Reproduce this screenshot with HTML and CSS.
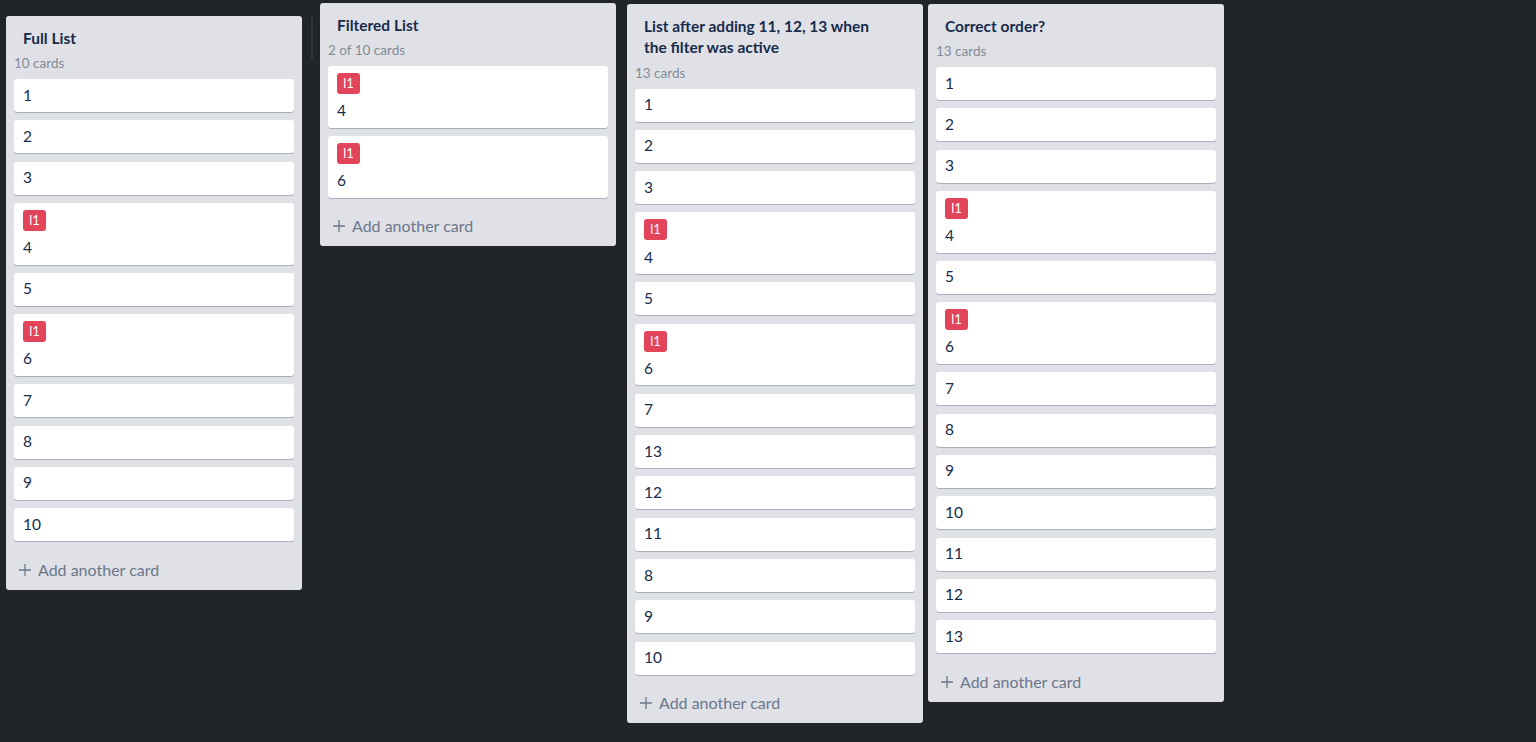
FILE: index.html
```html
<!DOCTYPE html>
<html lang="en">
<head>
<meta charset="utf-8">
<title>Board</title>
<link rel="stylesheet" href="styles.css">
</head>
<body>
<div class="board">
  <div class="list list-full">
    <div class="list-title">Full List</div>
    <div class="list-count">10 cards</div>
    <div class="cards">
      <div class="card">1</div>
      <div class="card">2</div>
      <div class="card">3</div>
      <div class="card"><span class="label">l1</span><span class="card-text">4</span></div>
      <div class="card">5</div>
      <div class="card"><span class="label">l1</span><span class="card-text">6</span></div>
      <div class="card">7</div>
      <div class="card">8</div>
      <div class="card">9</div>
      <div class="card">10</div>
    </div>
    <div class="add-card"><svg class="plus" viewBox="0 0 14 14" width="14" height="14"><path d="M7 1v12M1 7h12" stroke="#6b778c" stroke-width="1.3" fill="none"/></svg>Add another card</div>
  </div>
  <div class="drag-bar"></div>
  <div class="list list-filtered">
    <div class="list-title">Filtered List</div>
    <div class="list-count">2 of 10 cards</div>
    <div class="cards">
      <div class="card"><span class="label">l1</span><span class="card-text">4</span></div>
      <div class="card"><span class="label">l1</span><span class="card-text">6</span></div>
    </div>
    <div class="add-card"><svg class="plus" viewBox="0 0 14 14" width="14" height="14"><path d="M7 1v12M1 7h12" stroke="#6b778c" stroke-width="1.3" fill="none"/></svg>Add another card</div>
  </div>
  <div class="list list-after">
    <div class="list-title">List after adding 11, 12, 13 when the filter was active</div>
    <div class="list-count">13 cards</div>
    <div class="cards">
      <div class="card">1</div>
      <div class="card">2</div>
      <div class="card">3</div>
      <div class="card"><span class="label">l1</span><span class="card-text">4</span></div>
      <div class="card">5</div>
      <div class="card"><span class="label">l1</span><span class="card-text">6</span></div>
      <div class="card">7</div>
      <div class="card">13</div>
      <div class="card">12</div>
      <div class="card">11</div>
      <div class="card">8</div>
      <div class="card">9</div>
      <div class="card">10</div>
    </div>
    <div class="add-card"><svg class="plus" viewBox="0 0 14 14" width="14" height="14"><path d="M7 1v12M1 7h12" stroke="#6b778c" stroke-width="1.3" fill="none"/></svg>Add another card</div>
  </div>
  <div class="list list-correct">
    <div class="list-title">Correct order?</div>
    <div class="list-count">13 cards</div>
    <div class="cards">
      <div class="card">1</div>
      <div class="card">2</div>
      <div class="card">3</div>
      <div class="card"><span class="label">l1</span><span class="card-text">4</span></div>
      <div class="card">5</div>
      <div class="card"><span class="label">l1</span><span class="card-text">6</span></div>
      <div class="card">7</div>
      <div class="card">8</div>
      <div class="card">9</div>
      <div class="card">10</div>
      <div class="card">11</div>
      <div class="card">12</div>
      <div class="card">13</div>
    </div>
    <div class="add-card"><svg class="plus" viewBox="0 0 14 14" width="14" height="14"><path d="M7 1v12M1 7h12" stroke="#6b778c" stroke-width="1.3" fill="none"/></svg>Add another card</div>
  </div>
</div>
</body>
</html>
```

FILE: styles.css
```css
html, body {
  margin: 0;
  padding: 0;
  background: #212428;
  height: 100%;
}

body {
  font-family: Lato, "Open Sans", "Noto Sans", sans-serif;
  color: #172b4d;
}

.board {
  display: flex;
  align-items: flex-start;
  padding-left: 6px;
}

.list {
  width: 296px;
  box-sizing: border-box;
  background: #dfe1e6;
  border-radius: 3px;
  padding: 11.5px 8px 0 8px;
  display: flex;
  flex-direction: column;
}

.list-full { margin-top: 16px; }
.list-filtered { margin-top: 3px; margin-left: 7px; }
.list-after { margin-top: 4px; margin-left: 11px; }
.list-correct { margin-top: 4px; margin-left: 5px; }

.drag-bar {
  width: 2px;
  height: 44px;
  margin-top: 16px;
  margin-left: 9px;
  background: #2f3237;
  border-radius: 2px;
}

.list-title {
  font-size: 15.5px;
  font-weight: 700;
  line-height: 21.5px;
  padding: 0 34px 0 9px;
  color: #172b4d;
}

.list-count {
  font-size: 13.5px;
  line-height: 16px;
  margin-top: 6px;
  color: #838c95;
}

.cards {
  display: flex;
  flex-direction: column;
  gap: 8.33px;
  margin-top: 8px;
}

.card {
  background: #fff;
  border-radius: 3px;
  box-shadow: 0 1px 0 rgba(9, 30, 66, 0.25);
  padding: 5.5px 8px 7.5px 9px;
  font-size: 15.5px;
  line-height: 20px;
  color: #172b4d;
  display: flex;
  flex-direction: column;
  align-items: flex-start;
}

.label {
  display: inline-block;
  background: #e2445a;
  color: #fff;
  border-radius: 3px;
  height: 21px;
  width: 23px;
  box-sizing: border-box;
  font-size: 13px;
  line-height: 21px;
  text-align: center;
  margin-top: 1.5px;
  margin-bottom: 6.17px;
}

.add-card {
  display: flex;
  align-items: center;
  gap: 6px;
  height: 40px;
  margin-top: 8.33px;
  padding-left: 4px;
  font-size: 16px;
  line-height: 20px;
  color: #6b778c;
}

.plus {
  flex: none;
}
```
